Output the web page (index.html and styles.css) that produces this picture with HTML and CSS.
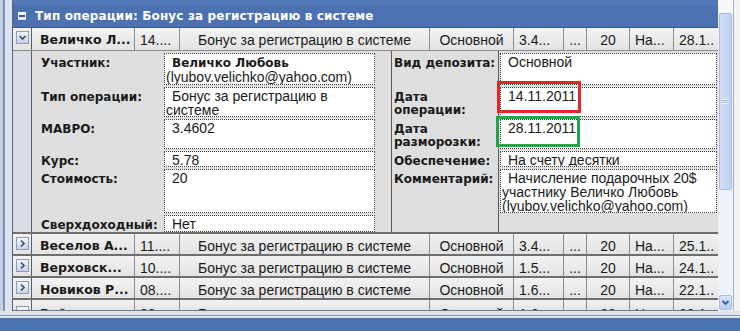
FILE: index.html
```html
<!DOCTYPE html>
<html lang="ru">
<head>
    <meta charset="UTF-8">
    <title>Операции</title>
    <link rel="stylesheet" href="styles.css">
</head>
<body>
    <div class="window">
        <div class="main">
            <div class="rail-left"></div>

            <div class="grid">
                <div class="group-head">
                    <span class="minus"></span>
                    <span>Тип операции: Бонус за регистрацию в системе</span>
                </div>

                <div class="row row-open">
                    <div class="cell btn-cell">
                        <span class="exp"><svg width="9" height="9" viewBox="0 0 9 9"><path d="M1.5 3 L4.5 6 L7.5 3" fill="none" stroke="#3c4a66" stroke-width="1.6"/></svg></span>
                    </div>
                    <div class="cell name">Величко Л...</div>
                    <div class="cell">14....</div>
                    <div class="cell center">Бонус за регистрацию в системе</div>
                    <div class="cell center">Основной</div>
                    <div class="cell">3.4...</div>
                    <div class="cell center">...</div>
                    <div class="cell center">20</div>
                    <div class="cell">На...</div>
                    <div class="cell">28.1..</div>
                </div>

                <div class="detail">
                    <div class="gutter"></div>
                    <div class="form">
                        <div class="lbl">Участник:</div>
                        <div class="val"><span class="bold-line">Величко Любовь</span><br>(lyubov.velichko@yahoo.com)</div>
                        <div class="sp"></div>
                        <div class="lbl">Вид депозита:</div>
                        <div class="val">Основной</div>

                        <div class="lbl">Тип операции:</div>
                        <div class="val">Бонус за регистрацию в системе</div>
                        <div class="sp"></div>
                        <div class="lbl">Дата операции:</div>
                        <div class="val">14.11.2011</div>

                        <div class="lbl">МАВРО:</div>
                        <div class="val">3.4602</div>
                        <div class="sp"></div>
                        <div class="lbl">Дата разморозки:</div>
                        <div class="val">28.11.2011</div>

                        <div class="lbl">Курс:</div>
                        <div class="val">5.78</div>
                        <div class="sp"></div>
                        <div class="lbl">Обеспечение:</div>
                        <div class="val">На счету десятки</div>

                        <div class="lbl">Стоимость:</div>
                        <div class="val">20</div>
                        <div class="sp"></div>
                        <div class="lbl">Комментарий:</div>
                        <div class="val">Начисление подарочных 20$ участнику Величко Любовь (lyubov.velichko@yahoo.com)</div>

                        <div class="lbl">Сверхдоходный:</div>
                        <div class="val">Нет</div>
                        <div class="sp"></div>
                        <div class="lbl"></div>
                        <div class="blank"></div>
                    </div>
                    <div class="mark mark-red"></div>
                    <div class="mark mark-green"></div>
                </div>

                <div class="row">
                    <div class="cell btn-cell">
                        <span class="exp"><svg width="9" height="9" viewBox="0 0 9 9"><path d="M3 1.5 L6 4.5 L3 7.5" fill="none" stroke="#3c4a66" stroke-width="1.6"/></svg></span>
                    </div>
                    <div class="cell name">Веселов А...</div>
                    <div class="cell">11....</div>
                    <div class="cell center">Бонус за регистрацию в системе</div>
                    <div class="cell center">Основной</div>
                    <div class="cell">3.4...</div>
                    <div class="cell center">...</div>
                    <div class="cell center">20</div>
                    <div class="cell">На...</div>
                    <div class="cell">25.1..</div>
                </div>
                <div class="row">
                    <div class="cell btn-cell">
                        <span class="exp"><svg width="9" height="9" viewBox="0 0 9 9"><path d="M3 1.5 L6 4.5 L3 7.5" fill="none" stroke="#3c4a66" stroke-width="1.6"/></svg></span>
                    </div>
                    <div class="cell name">Верховск...</div>
                    <div class="cell">10....</div>
                    <div class="cell center">Бонус за регистрацию в системе</div>
                    <div class="cell center">Основной</div>
                    <div class="cell">1.5...</div>
                    <div class="cell center">...</div>
                    <div class="cell center">20</div>
                    <div class="cell">На...</div>
                    <div class="cell">24.1..</div>
                </div>
                <div class="row">
                    <div class="cell btn-cell">
                        <span class="exp"><svg width="9" height="9" viewBox="0 0 9 9"><path d="M3 1.5 L6 4.5 L3 7.5" fill="none" stroke="#3c4a66" stroke-width="1.6"/></svg></span>
                    </div>
                    <div class="cell name">Новиков Р...</div>
                    <div class="cell">08....</div>
                    <div class="cell center">Бонус за регистрацию в системе</div>
                    <div class="cell center">Основной</div>
                    <div class="cell">1.6...</div>
                    <div class="cell center">...</div>
                    <div class="cell center">20</div>
                    <div class="cell">На...</div>
                    <div class="cell">22.1..</div>
                </div>
                <div class="row row-cut">
                    <div class="cell btn-cell">
                        <span class="exp"></span>
                    </div>
                    <div class="cell name">Войтенко...</div>
                    <div class="cell">08....</div>
                    <div class="cell center">Бонус за регистрацию в системе</div>
                    <div class="cell center">Основной</div>
                    <div class="cell">1.6...</div>
                    <div class="cell center">...</div>
                    <div class="cell center">20</div>
                    <div class="cell">На...</div>
                    <div class="cell">22.1..</div>
                </div>
            </div>

            <div class="scroll">
                <div class="scroll-top"></div>
                <div class="thumb"><span class="grip"></span></div>
                <div class="track"></div>
                <div class="arrow">
                    <svg width="9" height="9" viewBox="0 0 9 9"><path d="M1.5 3 L4.5 6 L7.5 3" fill="none" stroke="#3d5a9a" stroke-width="1.8"/></svg>
                </div>
                <div class="scroll-end"></div>
            </div>
            <div class="rail-right"></div>
        </div>
        <div class="foot"></div>
    </div>
</body>
</html>
```

FILE: styles.css
```css
body {
    margin: 0;
    background: #4a72b2;
    font-family: "Liberation Sans", Arial, sans-serif;
}

.window {
    width: 740px;
    height: 331px;
    overflow: hidden;
    display: flex;
    flex-direction: column;
}

.main {
    display: flex;
    height: 311px;
    background: #e8ebf1;
}

.rail-left {
    width: 12px;
    background: linear-gradient(to right, #c4cfe0 0, #c4cfe0 3px, #7d8fb3 3px, #7d8fb3 5px, #dce3ee 5px);
    border-right: 1px solid #5b6478;
}

.grid {
    width: 705px;
    height: 311px;
    overflow: hidden;
    background: #e4e4e4;
    border-bottom: 1px solid #6f7a90;
    box-sizing: border-box;
}

/* group header */
.group-head {
    height: 28px;
    box-sizing: border-box;
    padding: 9px 0 0 5px;
    display: flex;
    align-items: flex-start;
    gap: 9px;
    background: linear-gradient(to bottom, #5479b8 0, #5479b8 6px, #4b71b1 6px);
    border-bottom: 1px solid #3a5a92;
    color: #fff;
    font-family: "DejaVu Sans", Verdana, sans-serif;
    font-weight: bold;
    font-size: 12px;
    line-height: 14px;
    letter-spacing: 0.15px;
    white-space: nowrap;
}

.minus {
    width: 8px;
    height: 8px;
    margin-top: 3px;
    background: linear-gradient(to bottom, #ffffff, #dfe6f2);
    position: relative;
    flex: none;
}

.minus::after {
    content: "";
    position: absolute;
    left: 1px;
    right: 1px;
    top: 3px;
    height: 2px;
    background: #3b5690;
}

/* data rows */
.row {
    display: grid;
    grid-template-columns: 19px 103px 45px 250px 84px 50px 23px 43px 44px 44px;
    height: 20px;
    background: linear-gradient(to bottom, #f2f2f2, #e3e3e3);
    border-bottom: 2px solid #6e6e6e;
    font-size: 14px;
    color: #1a1a1a;
    overflow: hidden;
}

.row-open {
    height: 22px;
    border-bottom: 1px solid #8c8c8c;
}

.row-cut {
    border-bottom: none;
    height: 10px;
}

.cell {
    border-right: 1px solid #8c8c8c;
    padding: 4px 0 0 5px;
    line-height: 16px;
    white-space: nowrap;
    overflow: hidden;
}

.row-cut .cell {
    padding-top: 6px;
}

.cell:last-child {
    border-right: none;
}

.center {
    text-align: center;
    padding-left: 0;
}

.name {
    font-family: "DejaVu Sans", Verdana, sans-serif;
    font-weight: bold;
    font-size: 12.5px;
    padding-left: 8px;
}

.btn-cell {
    padding: 3px 0 0 3px;
    border-right: 1px solid #5e5e5e;
}

.exp {
    display: flex;
    align-items: center;
    justify-content: center;
    width: 11px;
    height: 11px;
    border: 1px solid #8d9cb9;
    background: linear-gradient(to bottom, #f1f4fa, #c8d3e8);
}

/* expanded detail */
.detail {
    display: flex;
    height: 181px;
    position: relative;
    border-bottom: 2px solid #6e6e6e;
}

.gutter {
    width: 18px;
    background: #d9dde5;
    border-right: 1px solid #5e5e5e;
}

.form {
    flex: 1;
    display: grid;
    grid-template-columns: 132px 211px 16px 107px 219px;
    grid-template-rows: 32px 30px 30px 16px 44px 17px;
    row-gap: 2px;
    padding-top: 2px;
    background-color: #dedede;
    background-image:
        linear-gradient(to right, transparent 359px, #5a5a5a 359px, #5a5a5a 360px, transparent 360px),
        linear-gradient(to right, transparent 466px, #5a5a5a 466px, #5a5a5a 467px, transparent 467px);
}

.lbl {
    font-family: "DejaVu Sans", Verdana, sans-serif;
    font-weight: bold;
    font-size: 12px;
    line-height: 13px;
    color: #1a1a1a;
    padding: 4px 0 0 9px;
}

.form .lbl:nth-child(5n+4) {
    padding-left: 3px;
}

.val {
    background: #fff;
    border: 1px dotted #3a3a3a;
    font-size: 14px;
    line-height: 14px;
    color: #1a1a1a;
    padding: 1px 4px 0 1px;
    text-indent: 6px;
    overflow: hidden;
}

.form .val:nth-child(5n) {
    margin-left: 2px;
}

.bold-line {
    font-family: "DejaVu Sans", Verdana, sans-serif;
    font-weight: bold;
    font-size: 12px;
}

.blank {
    background: transparent;
}

.mark {
    position: absolute;
    width: 78px;
    border: 3px solid;
}

.mark-red {
    left: 484px;
    top: 30px;
    height: 26px;
    border-color: #e0262b;
}

.mark-green {
    left: 483px;
    top: 65px;
    height: 25px;
    border-color: #23a447;
}

/* scrollbar */
.scroll {
    width: 15px;
    display: flex;
    flex-direction: column;
    background: #eef1f7;
    border-right: 1px solid #a9b1c0;
}

.scroll-top {
    height: 13px;
    background: #f5f7fb;
}

.thumb {
    height: 177px;
    margin: 0 1px;
    box-sizing: border-box;
    border: 1px solid #a7bbe3;
    border-radius: 2px;
    background: linear-gradient(to right, #d2dff7, #bfd0f2);
    display: flex;
    align-items: center;
    justify-content: center;
}

.grip {
    width: 7px;
    height: 5px;
    background: repeating-linear-gradient(to bottom, #eef3fc 0, #eef3fc 1px, #9fb3d9 1px, #9fb3d9 2px);
}

.track {
    height: 105px;
    background: #edf1fa;
}

.arrow {
    height: 13px;
    margin: 0 1px;
    border: 1px solid #a7bbe3;
    border-radius: 2px;
    background: linear-gradient(to bottom, #dae5f9, #bccdf0);
    display: flex;
    align-items: center;
    justify-content: center;
}

.scroll-end {
    flex: 1;
    background: #eef1f7;
}

.rail-right {
    flex: 1;
    background: #f3f3f3;
}

.foot {
    height: 20px;
    background: linear-gradient(to bottom, #dfe3ea 0, #dfe3ea 4px, #8a97ae 4px, #8a97ae 5px, #e6e9ee 5px, #e6e9ee 7px, #4a72b2 7px);
}
```
